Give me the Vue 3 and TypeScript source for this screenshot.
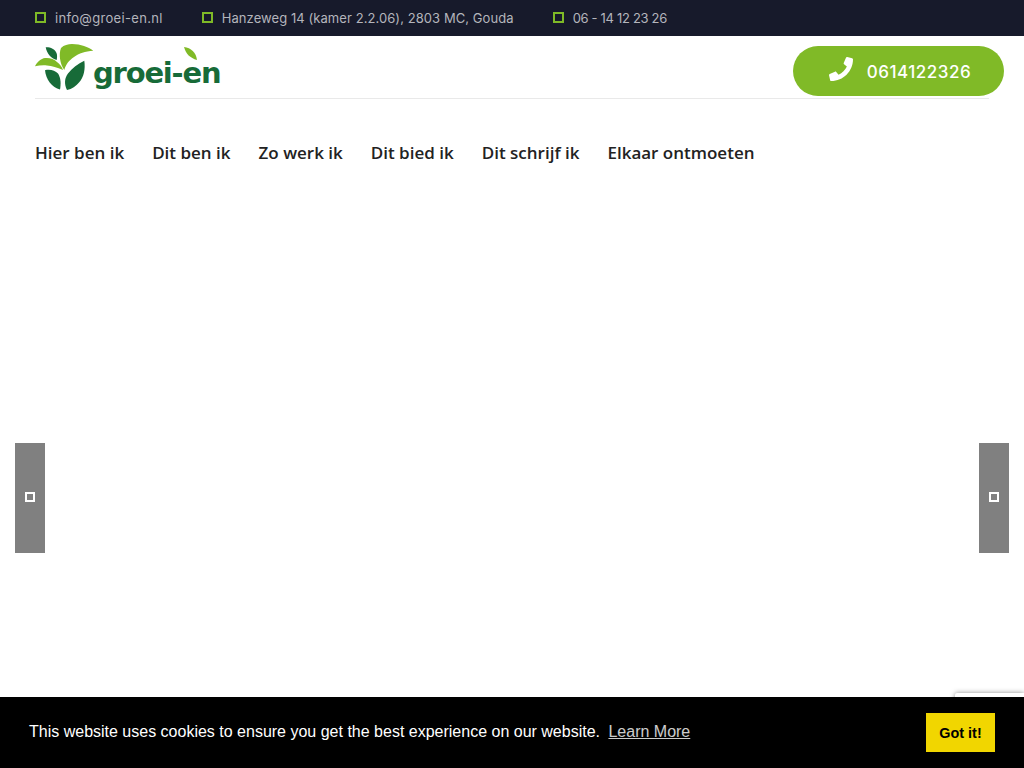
<script setup lang="ts">
const contacts = [
  { text: 'info@groei-en.nl', spacing: 0.32 },
  { text: 'Hanzeweg 14 (kamer 2.2.06), 2803 MC, Gouda', spacing: 0.07 },
  { text: '06 - 14 12 23 26', spacing: -0.32 },
]
const menu = ['Hier ben ik', 'Dit ben ik', 'Zo werk ik', 'Dit bied ik', 'Dit schrijf ik', 'Elkaar ontmoeten']
</script>

<template>
  <div class="page">
    <div class="topbar">
      <div v-for="item in contacts" :key="item.text" class="contact">
        <span class="bullet"></span>
        <span :style="{ letterSpacing: item.spacing + 'px' }">{{ item.text }}</span>
      </div>
    </div>

    <header class="header">
      <a class="logo">
        <svg class="logo-mark" viewBox="0 0 60 47" width="60" height="47">
          <path d="M29.3 26C25 20 23.5 10 26 4C29 1 33 0 37 0C46 0 53 3 58.3 6.7C50 7.5 44 9 39 13C34 16.5 31 20 29.3 26Z" fill="#80ba27" />
          <path d="M10.7 3.3C15 3 20 5 21.5 9C22.5 11.5 22 14 21.7 16C16 14.5 12 10 10.7 3.3Z" fill="#176b38" />
          <path d="M0 22.3C2 18 6 14.5 10 14C15 13.5 19 15 22 18C25 20 27 23 28 26C22 23.5 17 22 12 21.5C8 21 4 21.5 0 22.3Z" fill="#80ba27" />
          <path d="M10 26.3C15 25 20 26.5 23 29.5C26 34 26 40 25 45.5C17 43.5 11 36 10 26.3Z" fill="#176b38" />
          <path d="M49.3 16.7C50.5 25 49 33 44 38.5C41 42 37 45 32 46C29 40 29.5 34 33 29.5C37 24 43 20 49.3 16.7Z" fill="#176b38" />
        </svg>
        <span class="logo-text">groei-en<svg class="logo-leaf" viewBox="0 0 14 13" width="14" height="13"><path d="M0 0C7 1 12 5 13 13C6 11 2 7 0 0Z" fill="#80ba27" /></svg></span>
      </a>
      <a class="call">
        <svg class="call-icon" viewBox="0 0 512 512" width="24" height="24">
          <path fill="#fff" d="M493.4 24.6l-104-24c-11.3-2.6-22.9 3.3-27.5 13.9l-48 112c-4.2 9.8-1.4 21.3 6.9 28l60.6 49.6c-36 76.7-98.9 140.5-177.2 177.2l-49.6-60.6c-6.8-8.3-18.2-11.1-28-6.9l-112 48C3.9 366.5-2 378.1.6 389.4l24 104C27.1 504.2 36.7 512 48 512c256.1 0 464-207.5 464-464 0-11.2-7.7-20.9-18.6-23.4z" />
        </svg>
        <span class="call-number">0614122326</span>
      </a>
    </header>

    <nav class="nav">
      <a v-for="item in menu" :key="item">{{ item }}</a>
    </nav>

    <section class="slider">
      <button class="arrow prev"><span></span></button>
      <button class="arrow next"><span></span></button>
    </section>

    <div class="recaptcha"></div>
    <div class="cookie">
      <p>This website uses cookies to ensure you get the best experience on our website. <a>Learn More</a></p>
      <button class="got-it">Got it!</button>
    </div>
  </div>
</template>

<style>
html, body {
  background: #fff;
  overflow: hidden;
}
</style>

<style scoped>
.page {
  height: 768px;
  position: relative;
  overflow: hidden;
}

.topbar {
  height: 36px;
  background: #171a2b;
  display: flex;
  align-items: center;
  gap: 39px;
  padding: 0 35px;
  font-family: Inter, sans-serif;
  font-size: 13px;
  color: #b4b5bc;
}

.contact {
  display: flex;
  align-items: center;
  gap: 9px;
}

.bullet {
  width: 11px;
  height: 11px;
  box-sizing: border-box;
  border: 2px solid #7fba27;
  margin-top: -2px;
}

.header {
  margin: 0 35px;
  height: 62px;
  border-bottom: 1px solid #e9e9e9;
  display: flex;
  justify-content: space-between;
}

.logo {
  display: flex;
  padding-top: 8px;
  height: 47px;
}

.logo-text {
  position: relative;
  font-family: "DejaVu Sans", sans-serif;
  font-weight: 700;
  font-size: 29px;
  letter-spacing: -1.2px;
  line-height: 40px;
  margin: 9px 0 0 -2px;
  color: #176b38;
}

.logo-leaf {
  position: absolute;
  left: 91px;
  top: -6px;
}

.call {
  width: 211px;
  height: 50px;
  box-sizing: border-box;
  padding-left: 3px;
  margin: 10px -15px 0 0;
  border-radius: 25px;
  background: #80ba27;
  display: flex;
  align-items: center;
  justify-content: center;
  gap: 14px;
  font-family: Inter, sans-serif;
  font-size: 17px;
  font-weight: 500;
  letter-spacing: 0.5px;
  color: #fff;
}

.call-icon {
  margin-top: -4px;
}

.call-number {
  margin-top: 2px;
}

.nav {
  display: flex;
  gap: 28px;
  padding: 42px 35px 0;
  font-family: "Open Sans", sans-serif;
  font-size: 17px;
  font-weight: 600;
  line-height: 24px;
  color: #222;
}

.arrow {
  position: absolute;
  top: 443px;
  width: 30px;
  height: 110px;
  padding: 0;
  border: 0;
  background: #808080;
  display: flex;
  align-items: center;
  justify-content: center;
}

.arrow span {
  width: 10px;
  height: 10px;
  box-sizing: border-box;
  border: 2px solid #fff;
  margin-top: -2px;
}

.prev {
  left: 15px;
}

.next {
  right: 15px;
}

.recaptcha {
  position: absolute;
  right: 0;
  bottom: 14px;
  width: 69px;
  height: 61px;
  background: #fff;
  border-radius: 2px 0 0 0;
  box-shadow: 0 0 5px rgba(128, 128, 128, 0.9);
}

.cookie {
  position: fixed;
  left: 0;
  right: 0;
  bottom: 0;
  height: 71px;
  box-sizing: border-box;
  padding: 0 29px;
  background: #000;
  display: flex;
  align-items: center;
  justify-content: space-between;
  font-family: "Liberation Sans", sans-serif;
  font-size: 16px;
  line-height: 24px;
  color: #fff;
}

.cookie p {
  margin: 0 0 2px;
}

.cookie a {
  margin-left: 4px;
  opacity: 0.8;
  text-decoration: underline;
}

.got-it {
  width: 69px;
  height: 39px;
  padding: 0;
  border: 0;
  background: #f1d600;
  font-family: "Liberation Sans", sans-serif;
  font-size: 14.4px;
  font-weight: 700;
  color: #000;
}
</style>
